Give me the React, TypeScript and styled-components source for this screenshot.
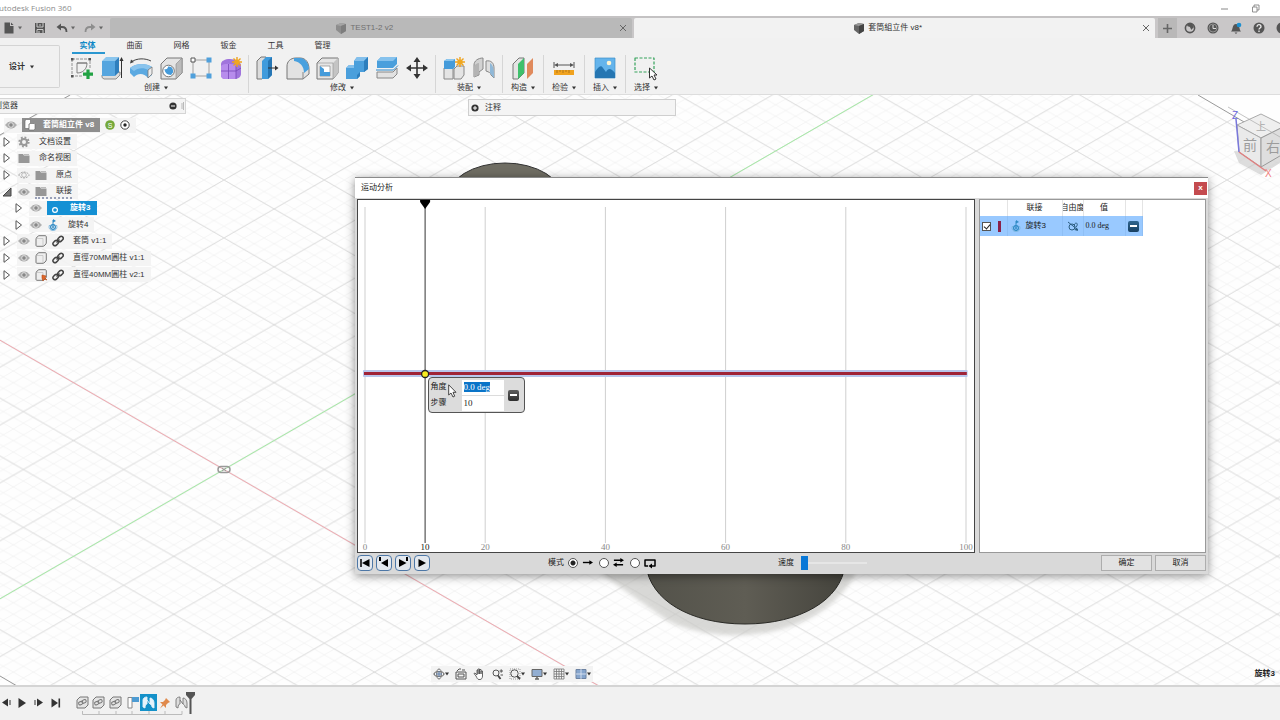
import React, { useEffect, useRef } from 'react';
import styled, { createGlobalStyle } from 'styled-components';

const sans = '"Liberation Sans", "Noto Sans CJK SC", sans-serif';
const serif = '"Liberation Serif", "Noto Sans CJK SC", serif';

const GlobalStyle = createGlobalStyle`
  * { box-sizing: border-box; }
  body { margin: 0; font-family: ${sans}; font-size: 8px; line-height: 12px; color: #333; }
  button, input { font: inherit; color: inherit; }
  button { padding: 0; border: 0; background: none; display: flex; align-items: center; justify-content: center; }
  svg { display: block; flex: none; }
`;

const Page = styled.div`
  height: 100vh;
  display: flex;
  flex-direction: column;
  overflow: hidden;
  background: #f1f1f1;
`;

/* ---------- window title and document tabs ---------- */

const TitleBar = styled.header`
  height: 16px;
  flex: none;
  display: flex;
  align-items: center;
  justify-content: space-between;
  background: #fff;
  color: #8c8c8c;
  font-family: "Open Sans", sans-serif;
`;
const AppName = styled.span`
  margin-left: -6px;
  white-space: nowrap;
`;
const WindowButtons = styled.div`
  display: flex;
  gap: 22px;
  padding-right: 20px;
`;
const TabBar = styled.div`
  height: 22px;
  flex: none;
  display: flex;
  background: #c9c7c8;
  border-top: 2px solid #c4c2c3;
`;
const QuickBar = styled.div`
  width: 110px;
  flex: none;
  display: flex;
  align-items: center;
  gap: 5px;
  padding-left: 3px;
  color: #666;
`;
const QuickButton = styled.button<{ $gap?: number }>`
  gap: 3px;
  margin-right: ${p => p.$gap ?? 0}px;
`;
const DocTabs = styled.div`
  flex: 1;
  display: flex;
  gap: 2px;
`;
const DocTab = styled.div<{ $active?: boolean }>`
  flex: 1;
  display: flex;
  align-items: center;
  padding-right: 5px;
  background: ${p => (p.$active ? '#f2f2f2' : '#b9b9b9')};
  color: ${p => (p.$active ? '#333' : '#707070')};
  border-radius: 2px 2px 0 0;
`;
const DocName = styled.button`
  flex: 1;
  gap: 3px;
`;
const TabTools = styled.div`
  width: 125px;
  flex: none;
  display: flex;
  align-items: center;
  gap: 11px;
  padding-left: 3px;
  overflow: hidden;
  color: #555;
`;
const NewTab = styled.button`
  width: 19px;
  height: 20px;
  flex: none;
  margin-right: -4px;
  background: #b9b8b8;
`;

/* ---------- ribbon ---------- */

const Ribbon = styled.nav`
  height: 57px;
  flex: none;
  display: flex;
  background: #f1f1f1;
  border-bottom: 1px solid #ddd;
`;
const Workspace = styled.button`
  width: 60px;
  height: 43px;
  margin: 7px 4px 0 0;
  gap: 5px;
  padding-right: 16px;
  border: 1px solid #d4d4d4;
  border-left: 0;
  border-radius: 0 2px 2px 0;
  font-weight: bold;
`;
const RibbonTabs = styled.div`
  display: flex;
  height: 17px;
`;
const RibbonTab = styled.button<{ $active?: boolean }>`
  width: 47px;
  position: relative;
  padding-bottom: 2px;
  color: ${p => (p.$active ? '#1089c6' : '#333')};
  font-weight: ${p => (p.$active ? 'bold' : 'normal')};
  &::after {
    content: '';
    display: ${p => (p.$active ? 'block' : 'none')};
    position: absolute;
    bottom: 1px;
    left: 8px;
    width: 33px;
    height: 2px;
    background: #2b97d0;
  }
`;
const Groups = styled.div`
  display: flex;
`;
const Group = styled.div<{ $pad: number }>`
  padding: 0 ${p => p.$pad}px;
  height: 38px;
  border-right: 1px solid #d6d6d6;
  &:last-child { border-right: 0; }
`;
const Tools = styled.div`
  display: flex;
`;
const Tool = styled.button`
  width: 30px;
  height: 26px;
`;
const GroupLabel = styled.button`
  width: 100%;
  height: 14px;
  gap: 4px;
  white-space: nowrap;
`;

/* ---------- canvas ---------- */

const Viewport = styled.main`
  flex: 1;
  position: relative;
  overflow: hidden;
  background: #fefefe;
`;
const Scene = styled.svg`
  position: absolute;
  inset: 0;
  width: 100%;
  height: 100%;
`;
const Browser = styled.aside`
  position: absolute;
  top: 3px;
  left: 0;
`;
const BrowserHead = styled.div`
  width: 186px;
  height: 16px;
  display: flex;
  align-items: center;
  justify-content: space-between;
  background: #f3f3f3;
  border: 1px solid #d5d5d5;
  border-left: 0;
`;
const Clipped = styled.span`
  margin-left: -6px;
`;
const HeadTools = styled.span`
  display: flex;
  gap: 4px;
  padding-right: 1px;
`;
const Tree = styled.ul`
  list-style: none;
  margin: 3px 0 0;
  padding: 0;
  height: 166px;
  display: grid;
  grid-auto-rows: 1fr;
`;
const Row = styled.li<{ $level: number }>`
  display: flex;
  align-items: center;
  padding-left: ${p => p.$level * 12 + 2}px;
`;
const Twist = styled.button`
  width: 10px;
  height: 12px;
  flex: none;
  margin-right: 5px;
`;
const RowBody = styled.div<{ $flush?: boolean; $root?: boolean }>`
  height: 15px;
  display: flex;
  align-items: center;
  gap: 5px;
  margin-left: ${p => (p.$root ? 2 : 0)}px;
  padding: 0 ${p => (p.$flush ? 0 : 6)}px 0 1px;
  background: rgba(243, 243, 243, 0.9);
`;
const NodeName = styled.span<{ $tone?: 'active' | 'root' | 'dotted'; $lead?: number }>`
  height: 14px;
  display: flex;
  align-items: center;
  gap: ${p => p.$lead ?? 9}px;
  white-space: nowrap;
  padding: ${p => (p.$tone === 'active' ? '0 7px 0 2px' : p.$tone === 'root' ? '0 6px 0 2px' : '0')};
  background: ${p => (p.$tone === 'active' ? '#1490d4' : p.$tone === 'root' ? '#8f8f8f' : 'transparent')};
  color: ${p => (p.$tone === 'active' || p.$tone === 'root' ? '#fff' : '#333')};
  font-weight: ${p => (p.$tone === 'active' || p.$tone === 'root' ? 'bold' : 'normal')};
  border-bottom: ${p => (p.$tone === 'dotted' ? '2px dotted #98a0b8' : '0')};
`;
const Comments = styled.section`
  position: absolute;
  top: 4px;
  left: 468px;
  width: 208px;
  height: 17px;
  display: flex;
  align-items: center;
  gap: 6px;
  padding-left: 2px;
  background: #f4f4f4;
  border: 1px solid #cfcfcf;
`;
const Cube = styled.svg`
  position: absolute;
  top: 8px;
  right: 0;
`;
const NavBar = styled.div`
  position: absolute;
  left: 40%;
  bottom: 3px;
  transform: translateX(-50%);
  display: flex;
  align-items: center;
  gap: 6px;
  height: 16px;
  padding: 0 2px;
  background: #f3f3f3;
`;
const NavButton = styled.button``;
const Status = styled.div`
  position: absolute;
  right: 5px;
  bottom: 5px;
  font-weight: bold;
  color: #222;
`;

/* ---------- motion study dialog ---------- */

const Dialog = styled.section`
  position: absolute;
  top: 82px;
  left: 355px;
  right: 72px;
  height: 397px;
  display: flex;
  flex-direction: column;
  background: #d9d9d9;
  border-top: 1px solid #8a8a8a;
  box-shadow: 0 2px 9px rgba(0, 0, 0, 0.45);
  color: #1a1a1a;
`;
const DialogTitle = styled.div`
  height: 20px;
  display: flex;
  align-items: center;
  justify-content: space-between;
  padding: 0 1px 0 6px;
  background: #fff;
`;
const CloseButton = styled.button`
  width: 13px;
  height: 13px;
  background: #c44b4f;
  color: #fff;
  font-weight: bold;
`;
const DialogBody = styled.div`
  flex: 1;
  display: flex;
  gap: 4px;
  padding: 1px 2px 0;
`;
const Chart = styled.div`
  flex: 1;
  position: relative;
  padding: 0 8px 0 7px;
  background: #fff;
  border: 1px solid #444;
`;
const Plot = styled.svg`
  width: 100%;
  height: 100%;
  overflow: visible;
  font-family: ${serif};
  font-size: 9px;
`;
const KeyEditor = styled.form`
  position: absolute;
  top: 177px;
  left: calc(10% + 8px);
  width: 97px;
  height: 36px;
  display: flex;
  align-items: center;
  justify-content: space-between;
  padding: 2px 5px 2px 2px;
  background: #dcdcdc;
  border: 1px solid #555;
  border-radius: 4px;
`;
const Fields = styled.div`
  display: flex;
  flex-direction: column;
  gap: 1px;
`;
const Field = styled.label`
  display: grid;
  grid-template-columns: 31px 42px;
  align-items: center;
`;
const FieldInput = styled.input`
  width: 42px;
  height: 15px;
  padding: 0 2px;
  border: 0;
  outline: 0;
  background: #fff;
  font-family: ${serif};
  font-size: 9px;
  &::selection { background: #0a74c8; color: #fff; }
`;
const MinusButton = styled.button`
  width: 11px;
  height: 11px;
  border-radius: 2px;
  background: linear-gradient(#5d5d5d, #2e2e2e);
`;
const Cursor = styled.svg`
  position: absolute;
  top: 184px;
  left: calc(10% + 28px);
`;
const JointPanel = styled.div`
  width: 227px;
  flex: none;
  background: #fff;
  border: 1px solid #999;
`;
const JointTable = styled.table`
  width: 162px;
  table-layout: fixed;
  border-collapse: collapse;
  th, td { padding: 0; overflow: hidden; white-space: nowrap; }
  th { height: 16px; font-weight: normal; border-right: 1px solid #e4e4e4; }
  td { height: 20px; background: #99c9ff; border-right: 1px solid #8fbff5; }
`;
const CellRow = styled.div<{ $gap: number }>`
  display: flex;
  align-items: center;
  gap: ${p => p.$gap}px;
  padding-left: 2px;
`;
const Centered = styled.div`
  display: flex;
  justify-content: center;
`;
const CheckBox = styled.input`
  appearance: none;
  width: 9px;
  height: 9px;
  margin: 0;
  background: #fff;
  border: 1px solid #555;
  &:checked::after {
    content: '';
    display: block;
    width: 3px;
    height: 5px;
    margin: 0 0 0 2px;
    border: solid #222;
    border-width: 0 1px 1px 0;
    transform: rotate(40deg);
  }
`;
const Swatch = styled.span`
  width: 3px;
  height: 11px;
  background: #8a2048;
`;
const Value = styled.span`
  font-family: ${serif};
  font-size: 8px;
`;
const RemoveJoint = styled(MinusButton)`
  background: linear-gradient(#2f6690, #173f61);
`;
const DialogFooter = styled.div`
  height: 21px;
  flex: none;
  display: grid;
  grid-template-columns: 191fr 230fr 323fr auto;
  align-items: center;
  padding: 0 2px 2px;
`;
const FooterPart = styled.div<{ $gap: number }>`
  display: flex;
  align-items: center;
  gap: ${p => p.$gap}px;
`;
const PlayButton = styled.button`
  width: 16px;
  height: 16px;
  border: 1px solid #4d77a6;
  border-radius: 4px;
  background: #e3e8ee;
  color: #000;
`;
const Mode = styled.label`
  display: flex;
  align-items: center;
  gap: 4px;
`;
const Radio = styled.input`
  appearance: none;
  width: 10px;
  height: 10px;
  margin: 0;
  border: 1px solid #555;
  border-radius: 50%;
  background: #fff;
  &:checked { background: radial-gradient(circle, #222 0 2px, #fff 3px); }
`;
const Slider = styled.input`
  appearance: none;
  width: 66px;
  height: 16px;
  margin: 0;
  background: linear-gradient(#e6e6e6, #e6e6e6) center / 100% 2px no-repeat;
  &::-webkit-slider-thumb {
    appearance: none;
    width: 7px;
    height: 14px;
    background: #0a78d7;
  }
`;
const PushButton = styled.button`
  width: 51px;
  height: 16px;
  background: #e2e2e2;
  border: 1px solid #adadad;
`;

/* ---------- timeline ---------- */

const Timeline = styled.footer`
  height: 35px;
  flex: none;
  display: flex;
  align-items: flex-start;
  padding-top: 7px;
  background: #f1f1f1;
  border-top: 2px solid #d4d4d4;
  color: #333;
`;
const Playback = styled.div`
  display: flex;
  width: 74px;
  flex: none;
`;
const PlaybackButton = styled.button`
  width: 17px;
  height: 17px;
  flex: none;
  &:first-child { width: 13px; }
`;
const Track = styled.div`
  width: 116px;
  display: flex;
  position: relative;
`;
const Feature = styled.button<{ $selected?: boolean }>`
  flex: 1;
  height: 17px;
  background: ${p => (p.$selected ? '#1491c9' : 'transparent')};
`;
const TrackLine = styled.svg`
  position: absolute;
  left: 8px;
  top: 17px;
`;
const Marker = styled.svg`
  position: absolute;
  right: -5px;
  top: -2px;
`;

/* ---------- drawings ---------- */

const Caret = ({ size = 5 }: { size?: number }) => (
  <svg width={size} height="4" viewBox="0 0 5 4"><path d="M0 0H5L2.5 4Z" fill="currentColor" /></svg>
);

const Pic = ({ children, size = 26, box = 26 }: { children: React.ReactNode; size?: number; box?: number }) => (
  <svg width={size} height={size} viewBox={`0 0 ${box} ${box}`} fill="none" strokeLinejoin="round">{children}</svg>
);

const Star = ({ x, y }: { x: number; y: number }) => (
  <g transform={`translate(${x} ${y})`} stroke="#eea21c" strokeWidth="1.4">
    <path d="M-5 0H5M0-5V5M-3.5-3.5 3.5 3.5M-3.5 3.5 3.5-3.5" /><circle r="2.6" fill="#f0a71f" stroke="none" />
  </g>
);

const icons = {
  sketch: <Pic><path d="M4 4H22V14M4 4V21H15" stroke="#888" strokeWidth=".9" strokeDasharray="3 1" /><path d="M9 8V18C15 18 19 14 19 8ZM9 8H19" stroke="#777" strokeWidth=".9" /><g fill="#555"><path d="M3 3h2.500v2.500h-2.500zM20.500 3h2.500v2.500h-2.500zM3 20h2.500v2.500h-2.500z" /></g><path d="M20 14.500V24M15 19.200H25" stroke="#22a244" strokeWidth="3.200" /></Pic>,
  extrude: <Pic><path d="M4 20V22.500L6 24H18L22 20V17Z" fill="#ddd" stroke="#777" strokeWidth=".8" /><path d="M4 6 8 2H21L17 6Z" fill="#8bc6ee" /><path d="M4 6H17V21H4Z" fill="#55a5df" /><path d="M17 6 21 2V17L17 21Z" fill="#2f7fbd" /><path d="M23.500 23V4" stroke="#333" /><path d="M21.500 6 23.500 2 25.500 6Z" fill="#333" /></Pic>,
  revolve: <Pic><path d="M3 7C9 3 17 3 23 6" stroke="#444" /><path d="M2 8.500 3 4.500 6 7Z" fill="#444" /><path d="M2 13C8 8 18 8 24 12V20L20 23C16 18 10 18 6 22L2 18Z" fill="#5ba9e1" /><path d="M2 13C8 8 18 8 24 12L20 15C16 12 9 13 6 16Z" fill="#8ac4ed" /><path d="M20 15 24 12V19L20 23Z" fill="#ececec" stroke="#777" strokeWidth=".8" /></Pic>,
  hole: <Pic><path d="M3 9 9 3H24V18L18 24H3Z" fill="#e4e4e4" stroke="#777" /><path d="M18 9 24 3V18L18 24Z" fill="#bbb" stroke="#888" strokeWidth=".6" /><circle cx="10.500" cy="16" r="5.800" fill="#fff" stroke="#777" /><path d="M10 11.500C14 11 15.500 14 15 17.500L13 20C9 20 6.500 17 6.500 14C9 15 10 13 10 11.500Z" fill="#459bda" /></Pic>,
  pattern: <Pic><path d="M5 5H21M5 5V21M5 21H21M21 5V21" stroke="#999" strokeWidth=".9" /><g fill="#4fa0dc"><path d="M18.500 2.500h5v5h-5zM18.500 18.500h5v5h-5zM2.500 18.500h5v5h-5z" /></g><path d="M3 3H7V7H3Z" fill="#fff" stroke="#555" /></Pic>,
  form: <Pic><path d="M3 9C3 6 7 4 12 4S23 7 23 10V19C23 22 20 24 16 24H7C4 24 3 22 3 20Z" fill="#a074dc" /><path d="M3 11C5 8 16 8 18 11V24H7C4 24 3 22 3 20Z" fill="#b78cec" /><path d="M3 16H18L23 13M10.500 9V24M18 11V24" stroke="#7748b8" strokeWidth=".8" /><Star x={19} y={7} /></Pic>,
  press: <Pic><path d="M3 6 7 2H12V20L8 24H3Z" fill="#dcdcdc" stroke="#777" /><path d="M8 6 12 2H18V20L14 24H8Z" fill="#409bdc" /><path d="M14 6 18 2V20L14 24Z" fill="#2676b4" /><path d="M14 13H23" stroke="#333" /><path d="M21 10.500 24.500 13 21 15.500Z" fill="#333" /></Pic>,
  fillet: <Pic><path d="M3 24V11C3 7 6 3 12 3H16C22 3 25 8 25 14V19L19 24Z" fill="#e2e2e2" stroke="#777" /><path d="M10 3H16C21 3 25 8 25 14L20 18C20 11 16 7 10 6Z" fill="#48a0de" /><path d="M19 24V17" stroke="#888" /></Pic>,
  shell: <Pic><path d="M3 8 8 3H24V18L19 24H3Z" fill="#e5e5e5" stroke="#777" /><path d="M19 8 24 3V18L19 24Z" fill="#c4c4c4" /><path d="M3 8H19V24" stroke="#999" strokeWidth=".7" /><path d="M6 11H16V21H6Z" fill="#fff" stroke="#888" strokeWidth=".7" /><path d="M6 11 10 14V17H16V21H6Z" fill="#459bda" /></Pic>,
  combine: <Pic><path d="M2 13 5 10H10V6L13 2H24V14L20 17H16V21L13 24H2Z" fill="#4a9fdc" /><path d="M10 6 13 2H24L20 6ZM2 13 5 10H10V13Z" fill="#84c0ec" /><path d="M20 6 24 2V14L20 17ZM13 20 16 17V21L13 24Z" fill="#2c7ebd" /></Pic>,
  split: <Pic><path d="M3 6 7 2H23V9L19 13H3Z" fill="#4a9fdc" /><path d="M3 6 7 2H23L19 6Z" fill="#86c2ed" /><path d="M2 15H19.500L24 10.500" stroke="#2d87c8" /><path d="M3 17H19L23 13V19L19 23H3Z" fill="#e2e2e2" stroke="#888" /></Pic>,
  move: <Pic><path d="M13 4V22M4 13H22" stroke="#333" strokeWidth="1.600" /><path d="M13 2 16.500 7H9.500ZM13 24 9.500 19H16.500ZM2 13 7 9.500V16.500ZM24 13 19 16.500V9.500Z" fill="#333" /></Pic>,
  assemble: <Pic><path d="M3 13H12V24H3ZM13 14 16 11H23V20L20 24H13Z" fill="#e4e4e4" stroke="#888" /><path d="M3 6 6 4H14V12L12 14H3Z" fill="#459bda" /><path d="M3 6 6 4H14L12 6Z" fill="#8bc6ee" /><Star x={19} y={7} /></Pic>,
  joint: <Pic><path d="M3 22V10C3 6 7 3 12 3V14L8 17V20Z" fill="#d2d2d2" stroke="#888" /><path d="M3 22V12C4 9 6 8 8 8V17L7 20Z" fill="#b4b4b4" /><path d="M15 6C20 5 23 8 23 13V23L20 20C20 18 18 17 15 16Z" fill="#dedede" stroke="#888" /><path d="M19 8C22 10 23 13 23 23L19 18Z" fill="#8fb8d8" /></Pic>,
  plane: <Pic><path d="M3 9 9 3H14V18L8 24H3Z" fill="#e4e4e4" stroke="#777" /><path d="M8 9 14 3V18L8 24Z" fill="#3fc06c" /><path d="M17 9 23 3V18L17 24Z" fill="#e08a5c" /></Pic>,
  measure: <Pic><path d="M3 7V13M23 7V13M5 10H21" stroke="#555" /><path d="M3 10 7 8V12ZM23 10 19 8V12Z" fill="#555" /><path d="M3 15H23V20H3Z" fill="#f0a21e" /><path d="M6 15V18M9 15V17M12 15V18M15 15V17M18 15V18" stroke="#996515" strokeWidth=".7" /></Pic>,
  image: <Pic><path d="M3 3H23V23H3Z" fill="#64b4ec" stroke="#3d8fc8" strokeWidth=".7" /><circle cx="17" cy="8" r="2.300" fill="#fff5d2" /><path d="M3 17C6 12 9 9 11 13L14 17C16 13 19 13 23 18V23H3Z" fill="#2576b2" /></Pic>,
  select: <Pic><path d="M2 3H21V17H2Z" stroke="#36a35c" strokeDasharray="3 1.500" strokeWidth="1.200" /><path d="M16.500 13V23L19 21 21 25 23 24 21 20H24Z" fill="#fff" stroke="#333" /></Pic>,
};

const ribbonGroups: { label: string; pad: number; tools: (keyof typeof icons)[] }[] = [
  { label: '创建', pad: 2, tools: ['sketch', 'extrude', 'revolve', 'hole', 'pattern', 'form'] },
  { label: '修改', pad: 3, tools: ['press', 'fillet', 'shell', 'combine', 'split', 'move'] },
  { label: '装配', pad: 3, tools: ['assemble', 'joint'] },
  { label: '构造', pad: 5, tools: ['plane'] },
  { label: '检验', pad: 5, tools: ['measure'] },
  { label: '插入', pad: 5, tools: ['image'] },
  { label: '选择', pad: 5, tools: ['select'] },
];

const CubeIcon = ({ light }: { light?: boolean }) => (
  <Pic size={12} box={12}>
    <path d="M1 3 6 1 11 2V9L6 12 1 8Z" fill={light ? '#8d8d8d' : '#666'} />
    <path d="M1 3 6 1 11 2 6 4Z" fill={light ? '#a4a4a4' : '#999'} /><path d="M6 4 11 2V9L6 12Z" fill={light ? '#7d7d7d' : '#444'} />
  </Pic>
);
const CrossIcon = () => <Pic size={8} box={8}><path d="M1 1 7 7M7 1 1 7" stroke="#666" /></Pic>;

const Eye = ({ off }: { off?: boolean }) => (
  <svg width="12" height="10" viewBox="0 0 12 10" fill="none">
    <path d="M.7 5C3 1 9 1 11.300 5 9 9 3 9 .7 5Z" fill={off ? 'none' : '#b0b0b0'} stroke="#aaa" strokeDasharray={off ? '2 1' : undefined} />
    <circle cx="6" cy="5" r="2.300" fill={off ? 'none' : '#888'} stroke={off ? '#aaa' : '#eee'} strokeWidth=".8" />
  </svg>
);
const Folder = () => <Pic size={12} box={12}><path d="M.5 2H5L6 3.500H11.500V11H.5Z" fill="#979797" /><path d="M6 2.500H11" stroke="#bbb" /></Pic>;
const Gear = () => <Pic size={12} box={12}><circle cx="6" cy="6" r="4.600" stroke="#999" strokeWidth="2" strokeDasharray="1.800 1.800" /><circle cx="6" cy="6" r="3" stroke="#999" strokeWidth="2" /></Pic>;
const Body = ({ pinned }: { pinned?: boolean }) => (
  <Pic size={12} box={12}>
    <path d="M1 4C1 3 3 .7 4 .7H10C11 .7 11.300 1 11.300 2V8C11.300 9 9 11.300 8 11.300H2C1.300 11.300 1 11 1 10Z" fill="#eee" stroke="#777" />
    <path d="M1.500 3.500H8V11" stroke="#bbb" strokeWidth=".7" />
    {pinned && <path d="M7 6 11 7 10 9 12 11 9 10 8 12 7 9Z" fill="#e0672b" stroke="#b9480f" strokeWidth=".6" />}
  </Pic>
);
const Link = () => (
  <Pic size={12} box={12}><g stroke="#444" strokeWidth="1.500"><rect x="5.500" y="2" width="6" height="4" rx="2" transform="rotate(-45 8.500 4)" /><rect x=".7" y="6" width="6" height="4" rx="2" transform="rotate(-45 3.700 8)" /><path d="M4.500 7.500 7.500 4.500" /></g></Pic>
);
const Revolute = ({ light }: { light?: boolean }) => (
  <Pic size={12} box={12}>
    <circle cx="6" cy="8" r="2.400" stroke={light ? '#fff' : '#2f8ac5'} strokeWidth="1.200" />
    {!light && <><path d="M2.500 6C1 10 4 11.500 6 11.500S11 10 9.500 6" stroke="#79b4dc" /><path d="M6 7V1" stroke="#2f8ac5" /><path d="M6 0 9 2 6 3.500Z" fill="#2f8ac5" /><circle cx="6" cy="8" r="1" fill="#2f8ac5" /></>}
  </Pic>
);
const RootIcon = () => <Pic size={12} box={12}><path d="M1 1.500 2.500 .5H6.500V4.500H10L11 5.500V10L10 11H5V9.500H1Z" fill="#fff" stroke="#666" strokeWidth=".6" /><path d="M5 9.500V5L6.500 4.500" stroke="#666" strokeWidth=".8" /></Pic>;
const TwistIcon = ({ open }: { open?: boolean }) => (
  <Pic size={10} box={10}>{open ? <path d="M9 1V9H1Z" fill="#777" stroke="#444" /> : <path d="M2 0.700 7.500 5 2 9.300Z" fill="#fff" stroke="#555" />}</Pic>
);
const Disc = ({ plus }: { plus?: boolean }) => (
  <Pic size={8} box={8}><circle cx="4" cy="4" r="3.600" fill="#333" /><path d={plus ? 'M2 4H6M4 2V6' : 'M2 4H6'} stroke="#fff" /></Pic>
);
const Minus = () => <svg width="7" height="2"><path d="M0 0H7V2H0Z" fill="#fff" /></svg>;

const FileIcon = () => <Pic size={12} box={12}><path d="M1.500 .5H7V4H10.500V11.500H1.500Z" fill="#555" /><path d="M8 .5 10.500 3H8Z" fill="#555" /></Pic>;
const SaveIcon = () => <Pic size={12} box={12}><path d="M1 1H11V11H1Z" fill="#555" /><path d="M3 1V5H9V1M3 11V7.500H9V11" stroke="#ccc" /><path d="M6 2V4M5 9V11" stroke="#ccc" /></Pic>;
const UndoIcon = ({ redo }: { redo?: boolean }) => (
  <Pic size={12} box={12}><g transform={redo ? 'matrix(-1 0 0 1 12 0)' : undefined}><path d="M2 5H6C9 5 10.500 7 10.500 10" stroke={redo ? '#8d8d8d' : '#555'} strokeWidth="1.800" /><path d="M.5 5 5 1.500V8.500Z" fill={redo ? '#8d8d8d' : '#555'} /></g></Pic>
);

function SceneDrawing() {
  return (
    <Scene>
      <defs>
        <pattern id="minor" width="20.060" height="11.580" patternUnits="userSpaceOnUse" x="224" y="374.500">
          <path d="M0 0 20.060 11.580M0 11.580 20.060 0" stroke="#f2f2f2" strokeWidth=".8" />
        </pattern>
        <pattern id="major" width="100.300" height="57.900" patternUnits="userSpaceOnUse" x="224" y="374.500">
          <path d="M0 0 100.300 57.900M0 57.900 100.300 0" stroke="#d2d2d2" strokeWidth=".7" />
        </pattern>
        <linearGradient id="steel"><stop offset="0" stopColor="#53524a" /><stop offset=".5" stopColor="#5f5d54" /><stop offset="1" stopColor="#45443d" /></linearGradient>
        <filter id="soft"><feGaussianBlur stdDeviation="2" /></filter>
      </defs>
      <rect width="100%" height="100%" fill="url(#minor)" />
      <rect width="100%" height="100%" fill="url(#major)" />
      <path d="M0 0H70L0 40ZM1198 0H1280V48Z" fill="#fefefe" />
      <path d="M70 0 0 40M1198 0 1280 48M0 581 17 591" stroke="#999" />
      <path d="M0 245.200 600 591.600" stroke="#f0aab1" />
      <path d="M0 503.800 874 -.8" stroke="#a6eba6" />
      <g fill="none" stroke="#999" strokeWidth="1.500"><rect x="218" y="371.500" width="12" height="6" rx="3" /><path d="M222 373 226 376M222 376 226 373" strokeWidth="1" /></g>
      <path d="M600 478 668 526C720 552 820 546 856 478Z" fill="#c9c9c6" opacity=".7" filter="url(#soft)" />
      <ellipse cx="505" cy="104" rx="58" ry="36" fill="#6f6d63" stroke="#333" />
      <path d="M646 470C650 505 690 529 745 529S841 505 845 470Z" fill="url(#steel)" stroke="#292925" />
    </Scene>
  );
}

function ViewCube() {
  return (
    <Cube width="52" height="82" viewBox="0 0 52 82" fill="none" fontSize="14" fontFamily={sans}>
      <path d="M6 48 11 60 33 72 52 60V54Z" fill="#bbb" opacity=".5" />
      <path d="M9 22 33 11 57 23 33 35Z" fill="#efefef" stroke="#aaa" />
      <path d="M9 22 33 35V64L11 49Z" fill="#eaeaea" stroke="#aaa" />
      <path d="M33 35 57 23V50L33 64Z" fill="#dedede" stroke="#999" />
      <path d="M0 4 52 34" stroke="#aaa" strokeWidth=".7" />
      <path d="M8 16 11 49" stroke="#7a78dc" strokeWidth="1.500" />
      <path d="M11 49 38 68" stroke="#e08080" strokeWidth="1.500" />
      <text x="15" y="47" fill="#9c9c9c">前</text>
      <text x="38" y="49" fill="#9c9c9c">右</text>
      <text x="28" y="27" fill="#aaa" fontSize="10">上</text>
      <text x="4" y="16" fill="#6c6ae0" fontSize="10">Z</text>
      <text x="37" y="74" fill="#f07e7e" fontSize="10">X</text>
    </Cube>
  );
}

const ticks = [0, 20, 40, 60, 80, 100];

function MotionDialog() {
  const angle = useRef<HTMLInputElement>(null);
  useEffect(() => {
    angle.current?.focus();
    angle.current?.select();
  }, []);
  return (
    <Dialog role="dialog" aria-label="运动分析">
      <DialogTitle>运动分析<CloseButton aria-label="关闭">x</CloseButton></DialogTitle>
      <DialogBody>
        <Chart>
          <Plot>
            {ticks.map(t => (
              <g key={t}>
                <line x1={`${t}%`} x2={`${t}%`} y1="7" y2="343" stroke="#cfcfcf" />
                <text x={`${t}%`} y="350" textAnchor="middle" fill="#888">{t}</text>
              </g>
            ))}
            <line x1="10%" x2="10%" y1="4" y2="343" stroke="#333" />
            <svg x="10%" overflow="visible"><path d="M-5 0H5V2L0 9-5 2Z" fill="#000" /></svg>
            <text x="10%" y="350" textAnchor="middle" fill="#111">10</text>
            <rect x="-2" y="170" width="100.600%" height="7" rx="1" fill="#b9c7ec" />
            <rect x="-1" y="172" width="100.300%" height="3" fill="#a02437" />
            <circle cx="10%" cy="174" r="3.500" fill="#f8ec20" stroke="#222" strokeWidth="1.300" />
          </Plot>
          <KeyEditor>
            <Fields>
              <Field>角度<FieldInput ref={angle} defaultValue="0.0 deg" /></Field>
              <Field>步骤<FieldInput defaultValue="10" /></Field>
            </Fields>
            <MinusButton type="button" aria-label="删除关键点"><Minus /></MinusButton>
          </KeyEditor>
          <Cursor width="9" height="14" viewBox="0 0 9 14"><path d="M.7 .8V11L3 9 5 13 6.700 12.200 5 8.300H8Z" fill="#fff" stroke="#333" strokeWidth=".9" /></Cursor>
        </Chart>
        <JointPanel>
          <JointTable>
            <colgroup><col style={{ width: 27 }} /><col style={{ width: 55 }} /><col style={{ width: 21 }} /><col style={{ width: 42 }} /><col style={{ width: 17 }} /></colgroup>
            <thead><tr><th /><th>联接</th><th><Centered>自由度</Centered></th><th>值</th><th /></tr></thead>
            <tbody>
              <tr>
                <td><CellRow $gap={7}><CheckBox type="checkbox" defaultChecked aria-label="旋转3" /><Swatch /></CellRow></td>
                <td><CellRow $gap={4}><Revolute />旋转3</CellRow></td>
                <td><Centered><Pic size={12} box={12}><circle cx="5" cy="7" r="3" stroke="#2c5d80" /><path d="M1 2 11 10M7 5C9 1 12 4 9 7" stroke="#2c5d80" /><path d="M11 11 7.500 10 10 7.500Z" fill="#2c5d80" /></Pic></Centered></td>
                <td><CellRow $gap={0}><Value>0.0 deg</Value></CellRow></td>
                <td><Centered><RemoveJoint aria-label="移除联接"><Minus /></RemoveJoint></Centered></td>
              </tr>
            </tbody>
          </JointTable>
        </JointPanel>
      </DialogBody>
      <DialogFooter>
        <FooterPart $gap={3}>
          <PlayButton aria-label="起点"><Pic size={12} box={12}><path d="M2 2V10" stroke="#000" strokeWidth="1.500" /><path d="M10.500 2V10L3 6Z" fill="#000" /></Pic></PlayButton>
          <PlayButton aria-label="上一关键点"><Pic size={12} box={12}><path d="M2 0V4" stroke="#000" strokeWidth="2" /><path d="M10 2V10L3 6Z" fill="#000" /></Pic></PlayButton>
          <PlayButton aria-label="下一关键点"><Pic size={12} box={12}><path d="M10 0V4" stroke="#000" strokeWidth="2" /><path d="M2 2V10L9.500 6Z" fill="#000" /></Pic></PlayButton>
          <PlayButton aria-label="播放"><Pic size={12} box={12}><path d="M2.500 2V10L10 6Z" fill="#000" /></Pic></PlayButton>
        </FooterPart>
        <FooterPart $gap={6}>
          <Mode>模式<Radio type="radio" name="mode" defaultChecked /><Pic size={11} box={12}><path d="M1 6H9" stroke="#000" strokeWidth="1.500" /><path d="M8 3.500 12 6 8 8.500Z" fill="#000" /></Pic></Mode>
          <Mode><Radio type="radio" name="mode" aria-label="往返" /><Pic size={11} box={12}><path d="M1 3.500H9M11 8.500H3" stroke="#000" strokeWidth="1.500" /><path d="M8 1 12 3.500 8 6ZM4 6 0 8.500 4 11Z" fill="#000" /></Pic></Mode>
          <Mode><Radio type="radio" name="mode" aria-label="循环" /><Pic size={12} box={12}><path d="M4 9H1V3H11V9H8" stroke="#000" strokeWidth="1.500" /><path d="M8 6.500V11.500L4.500 9Z" fill="#000" /></Pic></Mode>
        </FooterPart>
        <FooterPart $gap={7}><label htmlFor="speed">速度</label><Slider id="speed" type="range" defaultValue={0} /></FooterPart>
        <FooterPart $gap={3}><PushButton>确定</PushButton><PushButton>取消</PushButton></FooterPart>
      </DialogFooter>
    </Dialog>
  );
}

const Toggle = ({ open }: { open?: boolean }) => (
  <Twist aria-label={open ? '收起' : '展开'}><TwistIcon open={open} /></Twist>
);

function BrowserTree() {
  return (
    <Browser>
      <BrowserHead><Clipped>浏览器</Clipped><HeadTools><Disc /><svg width="3" height="8"><path d="M1 1V7M2.500 0V8" stroke="#aaa" strokeWidth=".8" /></svg></HeadTools></BrowserHead>
      <Tree>
        <Row $level={0}>
          <RowBody $root>
            <Eye />
            <NodeName $tone="root" $lead={7}><RootIcon />套筒組立件 v8</NodeName>
            <Pic size={10} box={10}><circle cx="5" cy="5" r="4.800" fill="#74a83a" /><text x="5" y="8" textAnchor="middle" fontSize="7" fill="#fff">S</text></Pic>
            <Pic size={10} box={10}><circle cx="5" cy="5" r="4.200" fill="#fff" stroke="#444" /><circle cx="5" cy="5" r="1.700" fill="#222" /></Pic>
          </RowBody>
        </Row>
        <Row $level={0}><Toggle /><RowBody><NodeName><Gear />文档设置</NodeName></RowBody></Row>
        <Row $level={0}><Toggle /><RowBody><NodeName><Folder />命名视图</NodeName></RowBody></Row>
        <Row $level={0}><Toggle /><RowBody><Eye off /><NodeName><Folder />原点</NodeName></RowBody></Row>
        <Row $level={0}><Toggle open /><RowBody><Eye /><NodeName $tone="dotted"><Folder />联接</NodeName></RowBody></Row>
        <Row $level={1}><Toggle /><RowBody $flush><Eye /><NodeName $tone="active"><Revolute light />旋转3</NodeName></RowBody></Row>
        <Row $level={1}><Toggle /><RowBody><Eye /><NodeName><Revolute />旋转4</NodeName></RowBody></Row>
        <Row $level={0}><Toggle /><RowBody><Eye /><Body /><NodeName><Link />套筒 v1:1</NodeName></RowBody></Row>
        <Row $level={0}><Toggle /><RowBody><Eye /><Body /><NodeName><Link />直徑70MM圓柱 v1:1</NodeName></RowBody></Row>
        <Row $level={0}><Toggle /><RowBody><Eye /><Body pinned /><NodeName><Link />直徑40MM圓柱 v2:1</NodeName></RowBody></Row>
      </Tree>
    </Browser>
  );
}

const FeatureSketch = () => <Pic size={13} box={13}><path d="M1 4 4 1H12V9L9 12H1Z" fill="#e4e4e4" stroke="#777" /><rect x="2.500" y="5.500" width="4.500" height="3" rx="1.500" stroke="#777" transform="rotate(-25 5 7)" /><rect x="6" y="4" width="4.500" height="3" rx="1.500" stroke="#777" transform="rotate(-25 8 6)" /></Pic>;
const FeatureJoint = ({ light }: { light?: boolean }) => (
  <Pic size={13} box={13}><g fill={light ? '#e6f3fb' : '#ddd'} stroke={light ? '#e6f3fb' : '#777'} strokeWidth=".9"><path d="M1 11V4C1 2 3 1 5 1V8C4 8 3 9 3 12Z" /><path d="M8 2C10 2 12 4 12 7V12L10 11C10 9 9 9 8 8Z" /></g><path d="M5 4 8 8" stroke={light ? '#e6f3fb' : '#777'} /></Pic>
);

export default function App() {
  return (
    <Page>
      <GlobalStyle />
      <TitleBar>
        <AppName>Autodesk Fusion 360</AppName>
        <WindowButtons>
          <button aria-label="最小化"><Pic size={9} box={9}><path d="M1 5H8" stroke="#888" /></Pic></button>
          <button aria-label="还原"><Pic size={9} box={9}><path d="M1.500 3H6V8H1.500ZM3 3V1H8V6H6" stroke="#777" strokeWidth=".8" /></Pic></button>
        </WindowButtons>
      </TitleBar>
      <TabBar>
        <QuickBar>
          <QuickButton $gap={7} aria-label="文件"><FileIcon /><Caret size={4} /></QuickButton>
          <QuickButton $gap={5} aria-label="保存"><SaveIcon /></QuickButton>
          <QuickButton $gap={4} aria-label="撤消"><UndoIcon /><Caret size={4} /></QuickButton>
          <QuickButton aria-label="重做"><UndoIcon redo /><Caret size={4} /></QuickButton>
        </QuickBar>
        <DocTabs>
          <DocTab><DocName><CubeIcon light />TEST1-2 v2</DocName><CrossIcon /></DocTab>
          <DocTab $active><DocName><CubeIcon />套筒組立件 v8*</DocName><CrossIcon /></DocTab>
        </DocTabs>
        <TabTools>
          <NewTab aria-label="新建"><Pic size={11} box={11}><path d="M5.500 1V10M1 5.500H10" stroke="#666" strokeWidth="1.600" /></Pic></NewTab>
          <Pic size={12} box={12}><circle cx="6" cy="6" r="4.600" stroke="#555" strokeWidth="1.600" /><path d="M4 2H8L10 5 7 8 6 5 3 4Z" fill="#555" /><path d="M5 8 6 6 8 9Z" fill="#c9c7c8" /></Pic>
          <Pic size={12} box={12}><circle cx="6" cy="6" r="5.500" fill="#555" /><circle cx="6" cy="6" r="4" stroke="#aaa" strokeWidth=".7" /><path d="M6 3V6.500H9" stroke="#ddd" /></Pic>
          <Pic size={12} box={12}><path d="M1 9.500C3 8 2 2 6 2S9 8 11 9.500ZM4.500 10.500H7.500L6 12Z" fill="#555" /><circle cx="9" cy="3" r="2.300" fill="#1b8fd0" /></Pic>
          <Pic size={12} box={12}><circle cx="6" cy="6" r="5.500" fill="#555" /><path d="M4 4.700C4 2 8 2 8 4.700 8 6 6 6 6 7.500M6 8.500V10" stroke="#eee" strokeWidth="1.300" /></Pic>
          <Pic size={12} box={12}><circle cx="6" cy="6" r="5.500" fill="#555" /></Pic>
        </TabTools>
      </TabBar>
      <Ribbon>
        <Workspace>设计<Caret size={4} /></Workspace>
        <div>
          <RibbonTabs>
            {['实体', '曲面', '网格', '钣金', '工具', '管理'].map((t, i) => <RibbonTab key={t} $active={i === 0}>{t}</RibbonTab>)}
          </RibbonTabs>
          <Groups>
            {ribbonGroups.map(g => (
              <Group key={g.label} $pad={g.pad}>
                <Tools>{g.tools.map(t => <Tool key={t} aria-label={t}>{icons[t]}</Tool>)}</Tools>
                <GroupLabel>{g.label}<Caret size={4} /></GroupLabel>
              </Group>
            ))}
          </Groups>
        </div>
      </Ribbon>
      <Viewport>
        <SceneDrawing />
        <BrowserTree />
        <Comments><Disc plus />注释</Comments>
        <ViewCube />
        <NavBar>
          <NavButton aria-label="动态观察"><Pic size={12} box={12}><ellipse cx="6" cy="6" rx="5" ry="2.300" stroke="#555" /><ellipse cx="6" cy="6" rx="2.300" ry="5" stroke="#777" /><path d="M6 3V9M3 6H9" stroke="#5d7da8" /></Pic><Caret size={4} /></NavButton>
          <NavButton aria-label="观察方向"><Pic size={12} box={12}><path d="M1 4H11V11H1ZM3 6H9V9H3ZM2 3 4 1H6M7 2H10" stroke="#555" /></Pic></NavButton>
          <NavButton aria-label="平移"><Pic size={12} box={12}><path d="M3 8 1 5.500 2 5 4 7V2H5V6 1H6.500V6 1.500H8V6 3H9.500V8C9.500 10 8.500 11.500 7 11.500H6C4.500 11.500 4 10 3 8Z" fill="#fff" stroke="#555" strokeWidth=".9" /></Pic></NavButton>
          <NavButton aria-label="缩放"><Pic size={12} box={12}><circle cx="5" cy="5" r="3" stroke="#555" /><path d="M7 7.500 9.500 11" stroke="#444" strokeWidth="1.800" /><path d="M8.500 3H12M10.200 1.300V4.700M9.500 7H12" stroke="#555" /></Pic></NavButton>
          <NavButton aria-label="窗口缩放"><Pic size={12} box={12}><path d="M1 1H11V11H1Z" stroke="#999" strokeDasharray="1 1" /><circle cx="5.500" cy="5.500" r="3.700" fill="#eee" stroke="#555" /><path d="M8 8 11 11" stroke="#444" strokeWidth="1.800" /></Pic><Caret size={4} /></NavButton>
          <NavButton aria-label="显示设置"><Pic size={12} box={12}><path d="M1 1.500H11V8.500H1Z" fill="#92aed2" stroke="#666" /><path d="M4 11H8M6 9V11" stroke="#666" strokeWidth="1.500" /></Pic><Caret size={4} /></NavButton>
          <NavButton aria-label="栅格"><Pic size={12} box={12}><path d="M1 1H11V11H1ZM1 3.500H11M1 6H11M1 8.500H11M3.500 1V11M6 1V11M8.500 1V11" stroke="#777" strokeWidth=".8" /></Pic><Caret size={4} /></NavButton>
          <NavButton aria-label="视口"><Pic size={12} box={12}><path d="M1 1.500H11V10.500H1Z" fill="#86a5cd" stroke="#6d83a3" /><path d="M6 1V11M1 6H11" stroke="#e4ebf5" strokeWidth=".8" /></Pic><Caret size={4} /></NavButton>
        </NavBar>
        <Status>旋转3</Status>
        <MotionDialog />
      </Viewport>
      <Timeline>
        <Playback>
          <PlaybackButton aria-label="后退"><Pic size={9} box={9}><path d="M6 .5V8.500L0 4.500Z" fill="#333" /><path d="M8 2V7" stroke="#333" /></Pic></PlaybackButton>
          <PlaybackButton aria-label="播放"><Pic size={10} box={10}><path d="M1.500 0V10L9 5Z" fill="#333" /></Pic></PlaybackButton>
          <PlaybackButton aria-label="前进"><Pic size={9} box={9}><path d="M3 .5V8.500L9 4.500Z" fill="#333" /><path d="M1 2V7" stroke="#333" /></Pic></PlaybackButton>
          <PlaybackButton aria-label="终点"><Pic size={10} box={10}><path d="M.5 .5V9.500L7 5Z" fill="#333" /><path d="M8.300 .5V9.500" stroke="#333" strokeWidth="1.600" /></Pic></PlaybackButton>
        </Playback>
        <Track>
          <Feature aria-label="草图1"><FeatureSketch /></Feature>
          <Feature aria-label="草图2"><FeatureSketch /></Feature>
          <Feature aria-label="草图3"><FeatureSketch /></Feature>
          <Feature aria-label="刚性组"><Pic size={13} box={13}><path d="M2 1.500H6V12H2Z" fill="#fff" stroke="#888" /><path d="M6 1H13V6H6Z" fill="#4d9bd2" /></Pic></Feature>
          <Feature $selected aria-label="联接1"><FeatureJoint light /></Feature>
          <Feature aria-label="固定"><Pic size={12} box={12}><path d="M7 1 11 5 9 6 7 8 7 11 4.500 8.500 1 11.500 3.500 7.500 1 5H4L6 3Z" fill="#e08a4c" /></Pic></Feature>
          <Feature aria-label="联接2"><FeatureJoint /></Feature>
          <TrackLine width="102" height="6" viewBox="0 0 102 6"><path d="M.5 0V3.500H100V0M17 3V0M34 3V0M50 3V0M67 3V0M83 3V0" stroke="#bbb" fill="none" /></TrackLine>
          <Marker width="9" height="22" viewBox="0 0 9 22"><path d="M0 0H9V3L5.500 7V22H3.500V7L0 3Z" fill="#555" /></Marker>
        </Track>
      </Timeline>
    </Page>
  );
}
